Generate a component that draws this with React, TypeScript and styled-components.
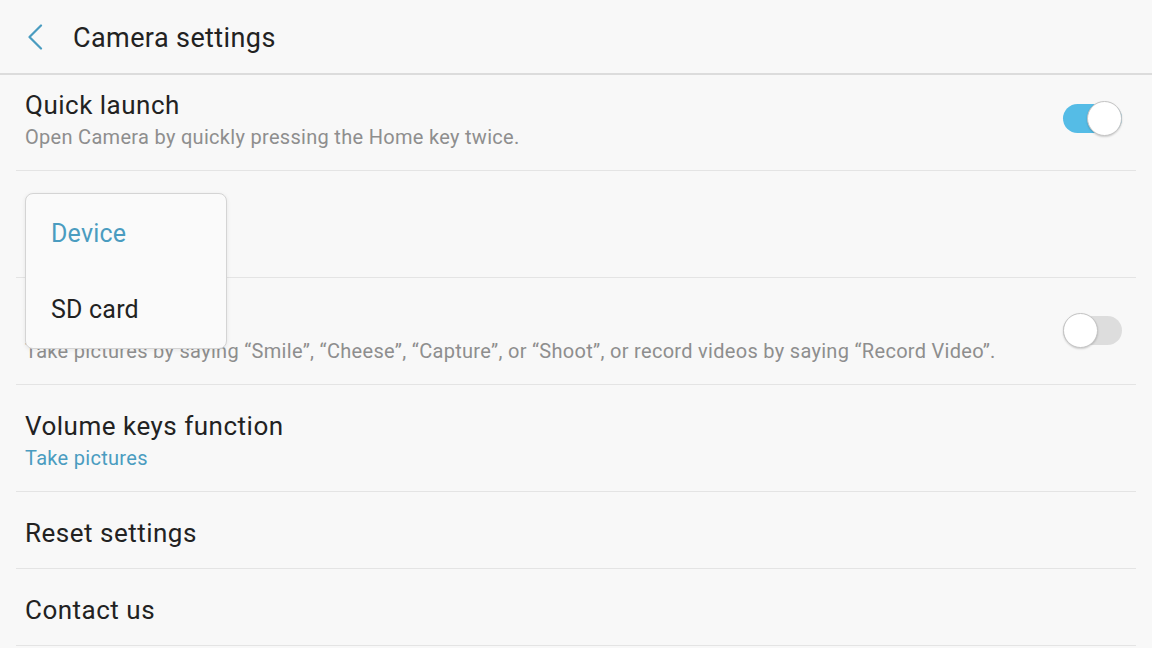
import React from "react";
import styled, { createGlobalStyle } from "styled-components";

const GlobalStyle = createGlobalStyle`
  html, body {
    margin: 0;
    padding: 0;
    background: #f8f8f8;
    font-family: Roboto, "Noto Sans", "Liberation Sans", sans-serif;
    color: #222222;
    overflow: hidden;
  }
`;

interface ISettingRow {
  title: string;
  summary?: string;
  summaryAccent?: boolean;
  toggle?: boolean;
}

const rows: ISettingRow[] = [
  {
    title: "Quick launch",
    summary: "Open Camera by quickly pressing the Home key twice.",
    toggle: true,
  },
  { title: "Storage location", summary: "Device", summaryAccent: true },
  {
    title: "Voice control",
    summary:
      "Take pictures by saying \u201cSmile\u201d, \u201cCheese\u201d, \u201cCapture\u201d, or \u201cShoot\u201d, or record videos by saying \u201cRecord Video\u201d.",
    toggle: false,
  },
  { title: "Volume keys function", summary: "Take pictures", summaryAccent: true },
  { title: "Reset settings" },
  { title: "Contact us" },
];

const App = () => {
  return (
    <Page>
      <GlobalStyle />
      <Header>
        <BackButton aria-label="Back">
          <svg width="16" height="26" viewBox="0 0 16 26" fill="none">
            <path
              d="M14 1.5 L2.5 13 L14 24.5"
              stroke="#4a9cc0"
              strokeWidth="2.2"
              strokeLinecap="round"
              strokeLinejoin="round"
            />
          </svg>
        </BackButton>
        <Title>Camera settings</Title>
      </Header>
      <List>
        {rows.map((row, index) => (
          <Row key={row.title} first={index === 0}>
            <RowText>
              <RowTitle>{row.title}</RowTitle>
              {row.summary && (
                <RowSummary accent={!!row.summaryAccent}>{row.summary}</RowSummary>
              )}
            </RowText>
            {row.toggle !== undefined && (
              <Switch on={row.toggle}>
                <Knob on={row.toggle} />
              </Switch>
            )}
          </Row>
        ))}
        <Popup>
          <PopupItem selected>Device</PopupItem>
          <PopupItem>SD card</PopupItem>
        </Popup>
      </List>
    </Page>
  );
};

const Page = styled.div`
  width: 1152px;
  height: 648px;
  display: flex;
  flex-direction: column;
  background: #f8f8f8;
`;

const Header = styled.header`
  height: 73px;
  display: flex;
  align-items: center;
  border-bottom: 2px solid #dcdcdc;
  padding-left: 27px;
  flex-shrink: 0;
`;

const BackButton = styled.button`
  background: none;
  border: none;
  padding: 0;
  width: 16px;
  height: 26px;
  display: flex;
`;

const Title = styled.h1`
  margin: 2px 0 0 30px;
  font-size: 27px;
  font-weight: 400;
  color: #222222;
  letter-spacing: 0.4px;
`;

const List = styled.div`
  position: relative;
  margin: 0 16px;
`;

const Row = styled.div<{ first: boolean }>`
  display: flex;
  align-items: center;
  padding: ${(props) => (props.first ? "13px" : "24px")} 14px 18px 9px;
  border-bottom: 1px solid #e4e4e4;
`;

const RowText = styled.div`
  flex: 1;
  display: flex;
  flex-direction: column;
`;

const RowTitle = styled.div`
  font-size: 26px;
  line-height: 34px;
  letter-spacing: 0.5px;
  color: #222222;
`;

const RowSummary = styled.div<{ accent: boolean }>`
  font-size: 20px;
  line-height: 30px;
  letter-spacing: 0.3px;
  color: ${(props) => (props.accent ? "#4a9cc0" : "#8e8e8e")};
`;

const Switch = styled.div<{ on: boolean }>`
  position: relative;
  width: 59px;
  height: 29px;
  border-radius: 15px;
  background: ${(props) => (props.on ? "#55bce6" : "#dddddd")};
  flex-shrink: 0;
  margin-top: ${(props) => (props.on ? "-4px" : "-8px")};
`;

const Knob = styled.div<{ on: boolean }>`
  position: absolute;
  top: -3px;
  left: ${(props) => (props.on ? "24px" : "0")};
  width: 33px;
  height: 33px;
  border-radius: 50%;
  background: #ffffff;
  border: 1px solid #c4c4c4;
  box-shadow: 0 1px 2px rgba(0, 0, 0, 0.18);
`;

const Popup = styled.div`
  position: absolute;
  left: 9px;
  top: 118px;
  width: 200px;
  padding: 1px 0;
  background: #fafafa;
  border: 1px solid #d4d4d4;
  border-radius: 8px;
  box-shadow: 0 1px 4px rgba(0, 0, 0, 0.08);
`;

const PopupItem = styled.div<{ selected?: boolean }>`
  height: 76px;
  display: flex;
  align-items: center;
  padding-left: 25px;
  font-size: 25px;
  letter-spacing: 0.2px;
  color: ${(props) => (props.selected ? "#4a9cc0" : "#222222")};
`;

export default App;
